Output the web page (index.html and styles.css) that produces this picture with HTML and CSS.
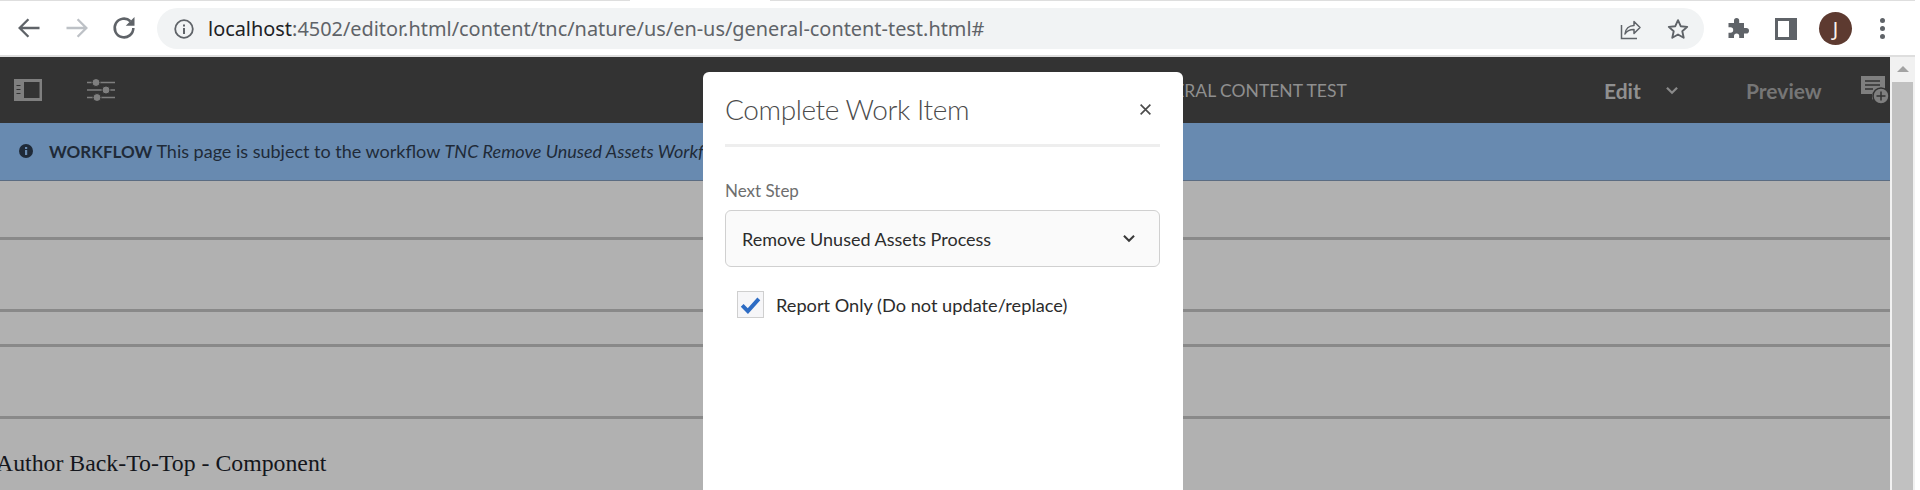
FILE: index.html
```html
<!DOCTYPE html>
<html lang="en">
<head>
<meta charset="utf-8">
<title>Complete Work Item</title>
<link rel="stylesheet" href="styles.css">
</head>
<body>
<div class="page">
  <header class="chrome">
    <span class="topline topline-left"></span>
    <span class="topline topline-right"></span>
    <div class="nav">
      <svg class="nav-icon" viewBox="0 0 24 24"><path d="M21 12H4M11.5 4.500 4 12l7.500 7.500" fill="none" stroke="#5f6368" stroke-width="2"/></svg>
      <svg class="nav-icon" viewBox="0 0 24 24"><path d="M3 12h17M12.500 4.500 20 12l-7.500 7.500" fill="none" stroke="#bdc1c6" stroke-width="2"/></svg>
      <svg class="nav-icon reload" viewBox="0 0 24 24"><path d="M20 12a8 8 0 1 1-2.500-5.800" fill="none" stroke="#5f6368" stroke-width="2.200"/><path d="M21 2.500v7.500h-7.500z" fill="#5f6368"/></svg>
    </div>
    <div class="omnibox">
      <svg class="info" viewBox="0 0 20 20"><circle cx="10" cy="10" r="8.800" fill="none" stroke="#5f6368" stroke-width="1.800"/><rect x="9" y="9" width="2" height="6" fill="#5f6368"/><rect x="9" y="5.500" width="2" height="2" fill="#5f6368"/></svg>
      <span class="url"><span class="host">localhost</span>:4502/editor.html/content/tnc/nature/us/en-us/general-content-test.html#</span>
      <svg class="omni-icon share" viewBox="0 0 24 24"><path d="M3.500 8v13.500h15.500" fill="none" stroke="#5f6368" stroke-width="1.500"/><path d="M7 17c.5-5 4-8.500 9-8.500V4.500l6 6-6 6v-4c-4 0-7 1-9 4.500z" fill="none" stroke="#5f6368" stroke-width="1.500" stroke-linejoin="round"/></svg>
      <svg class="omni-icon star" viewBox="0 0 24 24"><path d="M12 3.200l2.700 6 6.500.7-4.900 4.400 1.400 6.500L12 17.500l-5.700 3.300 1.400-6.500-4.900-4.400 6.500-.7z" fill="none" stroke="#5f6368" stroke-width="1.900" stroke-linejoin="round"/></svg>
    </div>
    <div class="tools">
      <svg class="puzzle" viewBox="0 0 24 24"><path d="M9 3.500a2.600 2.600 0 0 1 5.200 0V6H19v5h2.200a2.800 2.800 0 0 1 0 5.600H19V21h-4.800v-2a2.600 2.600 0 0 0-5.200 0v2H3.500v-5.300h2a2.700 2.700 0 0 0 0-5.400h-2V6H9z" fill="#5f6368"/></svg>
      <svg class="panel" viewBox="0 0 22 22"><rect x="1.500" y="1.500" width="19" height="19" fill="none" stroke="#5f6368" stroke-width="3"/><rect x="14" y="1" width="7" height="20" fill="#5f6368"/></svg>
      <span class="avatar">J</span>
      <span class="dots"><i></i><i></i><i></i></span>
    </div>
  </header>

  <div class="workspace">
    <main class="viewport">
      <div class="toolbar">
        <svg class="tb-icon" viewBox="0 0 28 22"><path fill-rule="evenodd" d="M0 0h28v22H0zM10 3v16h15.500V3z" fill="#7f7f7f"/><path d="M2.500 6.500h4M2.500 10.500h4M2.500 14.500h4" stroke="#333" stroke-width="1"/></svg>
        <svg class="tb-icon tb-sliders" viewBox="0 0 28 22"><path d="M0 3.500h28M0 11h28M0 18.500h28" stroke="#7f7f7f" stroke-width="1.500"/><circle cx="9" cy="3.500" r="4" fill="#7f7f7f" stroke="#333"/><circle cx="19" cy="11" r="4" fill="#7f7f7f" stroke="#333"/><circle cx="10" cy="18.500" r="4" fill="#7f7f7f" stroke="#333"/></svg>
        <span class="tb-title">GENERAL CONTENT TEST</span>
        <span class="tb-edit">Edit</span>
        <svg class="tb-chevron" viewBox="0 0 12 8"><path d="M1.500 1.500 6 6l4.500-4.500" fill="none" stroke="#8a8a8a" stroke-width="2"/></svg>
        <span class="tb-preview">Preview</span>
        <svg class="tb-comment" viewBox="0 0 28 28"><path d="M0 0h24v18h-9l-4 6v-6H0z" fill="#7f7f7f"/><path d="M4 5h15M4 9h15M4 13h8" stroke="#333" stroke-width="1.400"/><circle cx="20" cy="20" r="8" fill="#7f7f7f" stroke="#333" stroke-width="1.500"/><path d="M20 15.500v9M15.500 20h9" stroke="#333" stroke-width="1.500"/></svg>
      </div>
      <div class="banner">
        <svg class="banner-icon" viewBox="0 0 14 14"><circle cx="7" cy="7" r="7" fill="#1f2a38"/><rect x="6" y="6" width="2.200" height="5" fill="#688ab0"/><rect x="6" y="3" width="2.200" height="2" fill="#688ab0"/></svg>
        <span class="banner-text"><b>WORKFLOW</b> This page is subject to the workflow <em>TNC Remove Unused Assets Workflow</em></span>
      </div>
      <div class="content">
        <hr class="rule rule-a">
        <hr class="rule rule-b">
        <hr class="rule rule-c">
        <hr class="rule rule-b">
        <p class="component">Author Back-To-Top - Component</p>
      </div>
    </main>
    <div class="scrollbar">
      <span class="scroll-up"></span>
      <span class="scroll-thumb"></span>
    </div>
  </div>

  <section class="modal">
    <div class="modal-head">
      <h1 class="modal-title">Complete Work Item</h1>
      <svg class="modal-close" viewBox="0 0 12 12"><path d="M1.500 1.500l9 9M10.500 1.500l-9 9" stroke="#4b4b4b" stroke-width="1.500"/></svg>
    </div>
    <label class="field-label">Next Step</label>
    <div class="select">
      <span>Remove Unused Assets Process</span>
      <svg class="select-chevron" viewBox="0 0 12 8"><path d="M1.500 1.500 6 6l4.500-4.500" fill="none" stroke="#3a3a3a" stroke-width="1.800"/></svg>
    </div>
    <div class="check-row">
      <span class="checkbox"><svg viewBox="0 0 24 20"><path d="M2.500 10.500 9 17 21.500 3" fill="none" stroke="#2d6cc4" stroke-width="4.500"/></svg></span>
      <span class="check-label">Report Only (Do not update/replace)</span>
    </div>
  </section>
</div>
</body>
</html>
```
FILE: styles.css
```css
* { box-sizing: border-box; }
html, body { margin: 0; height: 100%; background: #fff; overflow: hidden; }
.page { position: relative; width: 1920px; height: 490px; overflow: hidden; }

/* browser chrome */
.chrome {
  position: relative;
  width: 1915px;
  height: 57px;
  display: flex;
  align-items: flex-start;
  padding-top: 8px;
  border-bottom: 2px solid #dedede;
  background: #fff;
}
.topline { position: absolute; top: 0; height: 1px; background: #dedede; }
.topline-left { left: 0; width: 630px; }
.topline-right { left: 770px; right: 0; }
.nav { display: flex; gap: 20px; padding-left: 15px; width: 157px; height: 40px; align-items: center; flex: none; }
.nav-icon { width: 28px; height: 28px; flex: none; }
.reload { margin-left: -1px; }
.omnibox {
  width: 1547px;
  height: 41px;
  flex: none;
  border-radius: 21px;
  background: #f1f3f4;
  display: flex;
  align-items: center;
  padding: 0 14px 0 17px;
}
.info { width: 20px; height: 20px; flex: none; margin-right: 14px; }
.url { font: 19.900px/1 "Noto Sans", sans-serif; color: #5f6368; white-space: nowrap; flex: 1; }
.host { color: #202124; }
.omni-icon { width: 24px; height: 24px; flex: none; }
.share { margin-right: 24px; }
.tools { display: flex; align-items: center; height: 41px; padding-left: 21px; }
.puzzle { width: 24px; height: 24px; margin-right: 26px; flex: none; }
.panel { width: 22px; height: 22px; margin-right: 22px; flex: none; }
.avatar {
  width: 33px;
  height: 33px;
  flex: none;
  border-radius: 50%;
  background: #5d3a30;
  color: #fbf3ec;
  font: 400 20px/33px "Noto Sans", sans-serif;
  text-align: center;
  margin-right: 28px;
}
.dots { display: flex; flex-direction: column; gap: 3px; }
.dots i { display: block; width: 5px; height: 5px; border-radius: 50%; background: #5f6368; }

/* page area */
.workspace { display: flex; height: 433px; }
.viewport { width: 1890px; flex: none; background: #b1b1b1; overflow: hidden; }
.scrollbar { width: 25px; flex: none; background: #f1f1f1; padding: 0 2px; display: flex; flex-direction: column; align-items: center; }
.scroll-up { width: 0; height: 0; margin-top: 9px; border: 6px solid transparent; border-top: 0; border-bottom: 6px solid #a3a3a3; }
.scroll-thumb { width: 21px; flex: 1; margin-top: 10px; background: #c1c1c1; }

.toolbar {
  height: 66px;
  background: #333;
  display: flex;
  align-items: center;
  padding-left: 14px;
  font-family: Lato, sans-serif;
}
.tb-icon { width: 28px; height: 22px; flex: none; }
.tb-sliders { margin-left: 45px; }
.tb-title { margin-left: 1023px; width: 200px; flex: none; font-size: 17.500px; color: #8f8f8f; white-space: nowrap; }
.tb-edit { margin-left: 266px; width: 36px; flex: none; font-size: 21px; font-weight: 700; color: #909090; }
.tb-chevron { width: 14px; height: 9px; margin-left: 25px; flex: none; }
.tb-preview { margin-left: 67px; width: 76px; flex: none; font-size: 21px; font-weight: 700; color: #767676; white-space: nowrap; }
.tb-comment { width: 28px; height: 28px; margin-left: 39px; flex: none; }

.banner {
  height: 58px;
  padding: 0 0 2px 19px;
  background: #688ab0;
  border-bottom: 1px solid #5b6c82;
  display: flex;
  align-items: center;
  font: 18px Lato, sans-serif;
  color: #1f2a38;
  white-space: nowrap;
}
.banner-icon { width: 14px; height: 14px; margin-right: 16px; flex: none; }
.banner-text b { font-size: 17px; font-weight: 700; }

.content { font-family: "Liberation Serif", serif; }
.rule { border: 0; height: 3px; margin: 0; background: #898989; }
.rule-a { margin-top: 56px; }
.rule-b { margin-top: 69px; }
.rule-c { margin-top: 32px; }
.component { margin: 31px 0 0 -4px; font-size: 23.800px; color: #14161c; white-space: nowrap; }

/* dialog */
.modal {
  position: absolute;
  left: 703px;
  top: 72px;
  width: 480px;
  height: 440px;
  padding: 0 23px 0 22px;
  background: #fff;
  border-radius: 6px;
  font-family: Lato, sans-serif;
}
.modal-head {
  height: 75px;
  display: flex;
  align-items: center;
  justify-content: space-between;
  padding: 1px 8px 0 0;
  border-bottom: 3px solid #eee;
}
.modal-title { margin: 0; font-size: 28px; font-weight: 300; letter-spacing: -.4px; color: #4b4b4b; }
.modal-close { width: 13px; height: 13px; flex: none; margin-top: 2px; }
.field-label { display: block; margin-top: 32px; font-size: 17px; line-height: 24px; color: #6e6e6e; }
.select {
  height: 57px;
  margin-top: 7px;
  padding: 0 23px 0 16px;
  display: flex;
  align-items: center;
  justify-content: space-between;
  background: #fafafa;
  border: 1px solid #d0d0d0;
  border-radius: 6px;
  font-size: 18px;
  color: #2c2c2c;
}
.select-chevron { width: 14px; height: 9px; flex: none; }
.check-row { display: flex; align-items: center; gap: 12px; margin-top: 24px; padding-left: 12px; }
.checkbox { width: 27px; height: 27px; flex: none; display: flex; align-items: center; justify-content: center; background: #f6f6f8; border: 1px solid #cfcfcf; }
.checkbox svg { width: 21px; height: 18px; }
.check-label { font-size: 18.200px; color: #2c2c2c; white-space: nowrap; }
```
